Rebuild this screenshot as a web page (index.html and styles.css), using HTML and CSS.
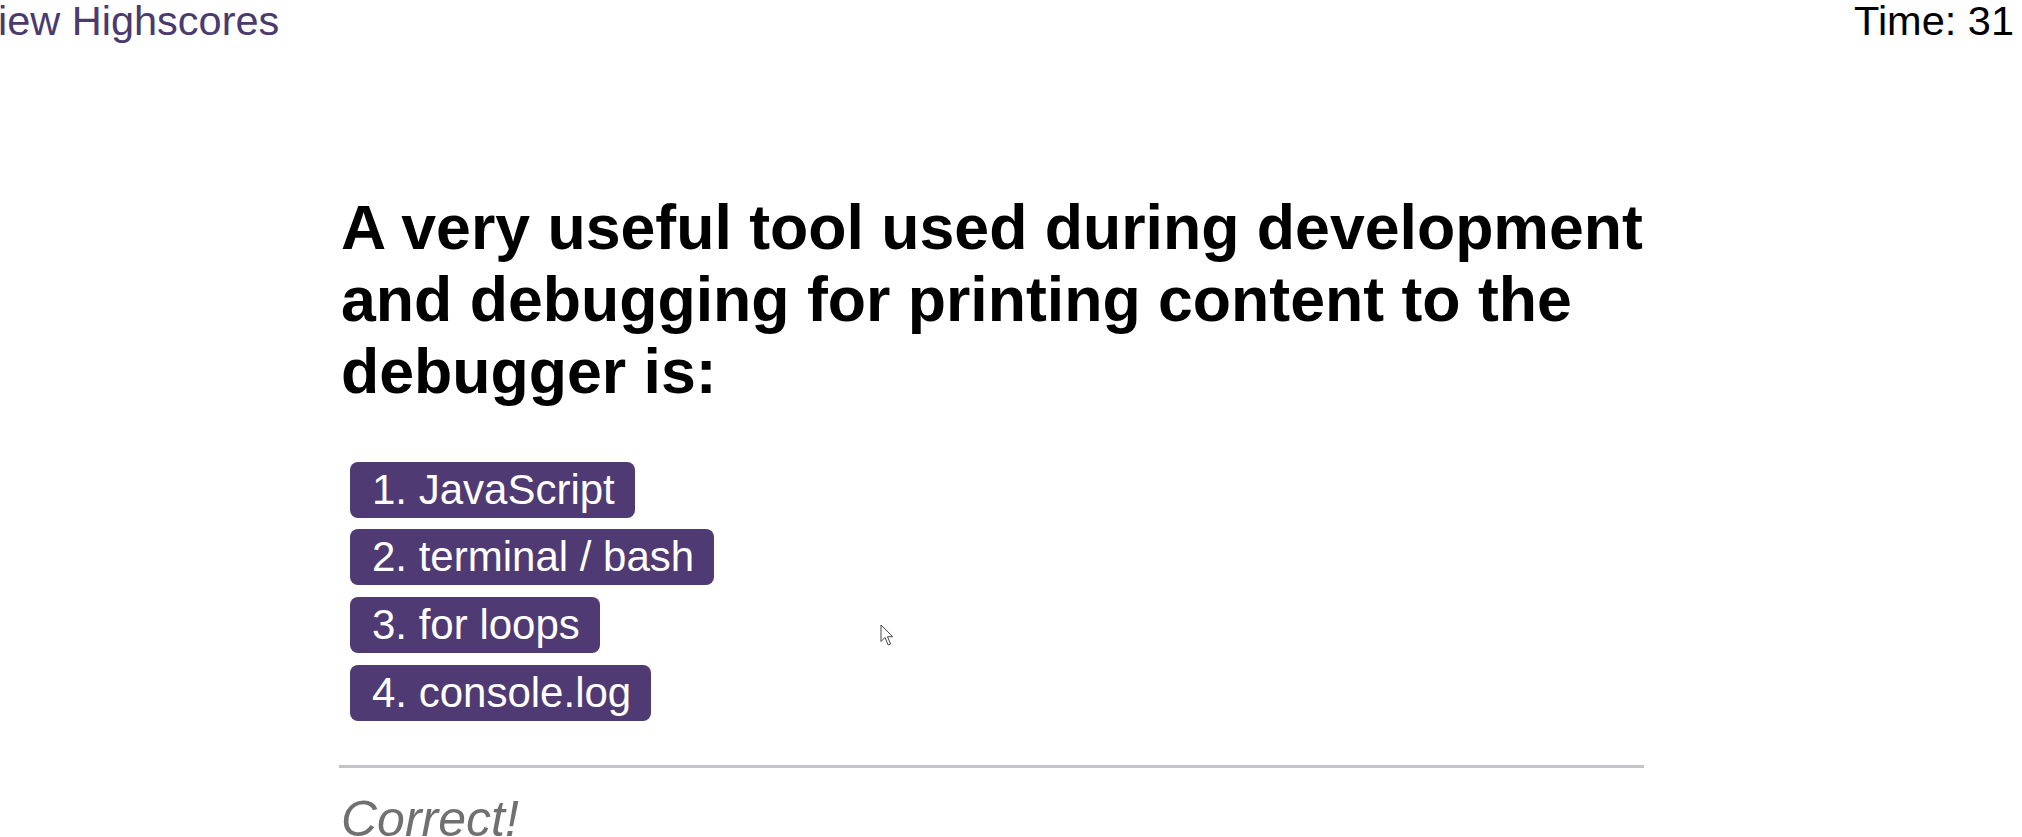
FILE: index.html
```html
<!DOCTYPE html>
<html lang="en">
<head>
<meta charset="utf-8">
<title>Code Quiz</title>
<link rel="stylesheet" href="styles.css">
</head>
<body>
<header class="top-bar">
  <a class="highscores-link" href="#">View Highscores</a>
  <div class="timer">Time: 31</div>
</header>
<main class="quiz">
  <h1 class="question">A very useful tool used during development and debugging for printing content to the debugger is:</h1>
  <div class="choices">
    <button class="choice">1. JavaScript</button>
    <button class="choice">2. terminal / bash</button>
    <button class="choice">3. for loops</button>
    <button class="choice">4. console.log</button>
  </div>
  <hr class="divider">
  <p class="feedback">Correct!</p>
</main>
<svg class="cursor" width="14" height="23" viewBox="0 0 14 23" aria-hidden="true">
  <path d="M1 1 L1 17.5 L5 13.5 L8.2 21 L10.6 20 L7.5 12.7 L12.8 12.7 Z" fill="#ffffff" stroke="#444444" stroke-width="1" stroke-linejoin="miter"/>
</svg>
</body>
</html>
```
FILE: styles.css
```css
html, body {
  margin: 0;
  padding: 0;
  background: #ffffff;
  overflow: hidden;
}

body {
  font-family: "Liberation Sans", Arial, sans-serif;
  color: #000000;
  width: 2022px;
  height: 837px;
  position: relative;
}

.top-bar {
  display: flex;
  justify-content: space-between;
  align-items: flex-start;
  font-size: 41.5px;
  line-height: 1;
  padding-right: 8px;
}

.highscores-link {
  color: #4a3a6f;
  text-decoration: none;
  margin-left: -29px;
}

.timer {
  color: #000000;
}

.quiz {
  width: 1310px;
  margin-left: 341px;
  margin-top: 149px;
}

.question {
  font-size: 62.6px;
  font-weight: bold;
  line-height: normal;
  margin: 0;
}

.choices {
  display: flex;
  flex-direction: column;
  align-items: flex-start;
  gap: 11.7px;
  margin-top: 55px;
  margin-left: 9px;
}

.choice {
  font-family: "Liberation Sans", Arial, sans-serif;
  font-size: 42px;
  line-height: 48px;
  height: 56px;
  padding: 4px 20px 4px 22px;
  border: none;
  border-radius: 8px;
  background: #4f3a73;
  color: #ffffff;
  cursor: pointer;
}

.divider {
  width: 1305px;
  margin: 44px 0 0 -2px;
  border: none;
  height: 3px;
  background: #c4c4c8;
}

.feedback {
  margin: 22px 0 0 0;
  font-size: 50px;
  font-style: italic;
  color: #707070;
}

.cursor {
  position: absolute;
  left: 880px;
  top: 624px;
}
```
